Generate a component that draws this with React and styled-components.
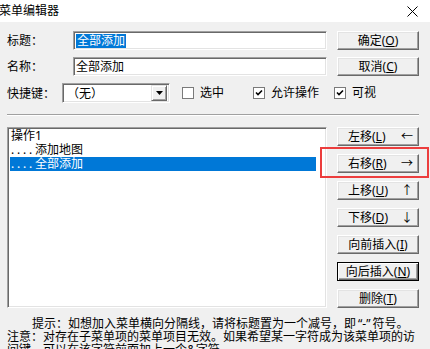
import React from "react";
import styled, { createGlobalStyle } from "styled-components";

const GlobalStyle = createGlobalStyle`
  html, body {
    margin: 0;
    padding: 0;
    background: #f0f0f0;
  }
  body {
    font-family: "Noto Sans", "Noto Sans CJK SC", sans-serif;
    font-size: 12px;
    color: #000;
  }
`;

const Window = styled.div`
  width: 430px;
  height: 349px;
  overflow: hidden;
  background: #f0f0f0;
  display: flex;
  flex-direction: column;
`;

const TitleBar = styled.div`
  height: 22px;
  flex: none;
  background: #fff;
  display: flex;
  align-items: center;
  justify-content: space-between;
  padding-right: 12px;
`;

const Title = styled.span`
  font-size: 12px;
  line-height: 22px;
  margin-left: -1px;
`;

const Body = styled.div`
  padding: 9px 11px 0 7px;
  display: flex;
  flex-direction: column;
`;

const FieldGrid = styled.div`
  display: grid;
  grid-template-columns: 56px 254px 82px;
  grid-auto-rows: 19px;
  column-gap: 10px;
  row-gap: 7px;
  align-items: center;
`;

const Label = styled.span`
  line-height: 19px;
  white-space: nowrap;
`;

const Sunken = styled.div`
  box-sizing: border-box;
  background: #fff;
  border-top: 1px solid #a0a0a0;
  border-left: 1px solid #a0a0a0;
  border-right: 1px solid #fff;
  border-bottom: 1px solid #fff;
  box-shadow: inset 1px 1px #696969, inset -1px -1px #e3e3e3;
`;

const TextBox = styled(Sunken)`
  height: 19px;
  padding: 0 2px;
  display: flex;
  align-items: center;
  line-height: 14px;
`;

const Selected = styled.span`
  background: #0078d7;
  color: #fff;
  padding: 0 1px;
`;

const Btn = styled.button`
  box-sizing: border-box;
  height: 19px;
  width: 82px;
  padding: ${(p) => (p.$split ? "0 5px 0 10px" : "0")};
  margin: 0;
  font: inherit;
  line-height: 14px;
  color: #000;
  background: #f0f0f0;
  display: flex;
  align-items: center;
  justify-content: ${(p) => (p.$split ? "space-between" : "center")};
  border: 1px solid transparent;
  border-top-color: ${(p) => (p.$primary ? "#000" : "#fff")};
  border-left-color: ${(p) => (p.$primary ? "#000" : "#fff")};
  border-right-color: ${(p) => (p.$primary ? "#000" : "#696969")};
  border-bottom-color: ${(p) => (p.$primary ? "#000" : "#696969")};
  box-shadow: ${(p) =>
    p.$primary
      ? "inset 1px 1px #fff, inset -1px -1px #696969, inset -2px -2px #a0a0a0"
      : "inset -1px -1px #a0a0a0, inset 1px 1px #e3e3e3"};
`;

const Mn = styled.u`
  text-underline-offset: 1px;
`;

const OptionRow = styled.div`
  display: flex;
  align-items: center;
  height: 20px;
  margin-top: 7px;
`;

const ShortLabel = styled(Label)`
  width: 55px;
`;

const Combo = styled(Sunken)`
  width: 108px;
  height: 20px;
  display: flex;
  align-items: center;
  justify-content: space-between;
  padding: 2px 2px 2px 4px;
`;

const DropBtn = styled.span`
  box-sizing: border-box;
  width: 16px;
  height: 16px;
  background: #f0f0f0;
  border-top: 1px solid #e3e3e3;
  border-left: 1px solid #e3e3e3;
  border-right: 1px solid #696969;
  border-bottom: 1px solid #696969;
  box-shadow: inset 1px 1px #fff, inset -1px -1px #a0a0a0;
  display: flex;
  align-items: center;
  justify-content: center;
`;

const CheckItem = styled.label`
  display: flex;
  align-items: center;
  gap: 6px;
  margin-left: ${(p) => p.$offset}px;
  line-height: 14px;
`;

const Box = styled.span`
  box-sizing: border-box;
  width: 12px;
  height: 12px;
  background: #fff;
  border: 1px solid #7a7a7a;
  display: flex;
  align-items: center;
  justify-content: center;
`;

const Separator = styled.div`
  margin-top: 11px;
  height: 0;
  border-top: 1px solid #a0a0a0;
  border-bottom: 1px solid #fff;
`;

const Lower = styled.div`
  margin-top: 11px;
  display: grid;
  grid-template-columns: 320px 82px;
  column-gap: 10px;
  height: 181px;
`;

const ListBox = styled(Sunken)`
  padding: 1px 2px;
  display: flex;
  flex-direction: column;
  overflow: hidden;
`;

const Item = styled.div`
  height: 14px;
  line-height: 14px;
  padding-left: 1px;
  margin-right: 8px;
  white-space: pre;
  overflow: hidden;
  background: ${(p) => (p.$active ? "#0078d7" : "transparent")};
  color: ${(p) => (p.$active ? "#fff" : "#000")};
`;

const Dots = styled.span`
  letter-spacing: 2.8px;
`;

const ButtonCol = styled.div`
  display: flex;
  flex-direction: column;
  justify-content: space-between;
`;

const Spot = styled.div`
  position: relative;
`;

const Ring = styled.div`
  position: absolute;
  top: -7px;
  left: -17px;
  right: -10px;
  bottom: -5px;
  border: 2px solid #ec3d3d;
  pointer-events: none;
`;

const Notes = styled.div`
  margin-top: 9px;
  line-height: 13px;
`;

const Note = styled.p`
  margin: 0;
  text-indent: ${(p) => p.$indent || 0}px;
  white-space: ${(p) => (p.$single ? "nowrap" : "normal")};
`;

const Quote = styled.span`
  padding: 0 2px;
`;

const CheckMark = () => (
  <svg width="8" height="8" viewBox="0 0 8 8">
    <path d="M1 3.5 L3 5.5 L7 1.5" fill="none" stroke="#000" strokeWidth="1.6" />
  </svg>
);

const Check = ({ checked, children, offset }) => (
  <CheckItem $offset={offset}>
    <Box>{checked && <CheckMark />}</Box>
    <span>{children}</span>
  </CheckItem>
);

const App = () => {
  return (
    <Window>
      <GlobalStyle />
      <TitleBar>
        <Title>菜单编辑器</Title>
        <svg width="11" height="11" viewBox="0 0 11 11">
          <path d="M0.5 0.5 L10.5 10.5 M10.5 0.5 L0.5 10.5" stroke="#000" strokeWidth="1" />
        </svg>
      </TitleBar>
      <Body>
        <FieldGrid>
          <Label>标题：</Label>
          <TextBox>
            <Selected>全部添加</Selected>
          </TextBox>
          <Btn>
            确定(<Mn>O</Mn>)
          </Btn>
          <Label>名称：</Label>
          <TextBox>全部添加</TextBox>
          <Btn>
            取消(<Mn>C</Mn>)
          </Btn>
        </FieldGrid>
        <OptionRow>
          <ShortLabel>快捷键：</ShortLabel>
          <Combo>
            <span>（无）</span>
            <DropBtn>
              <svg width="7" height="4" viewBox="0 0 7 4">
                <path d="M0 0 H7 L3.5 4 Z" fill="#000" />
              </svg>
            </DropBtn>
          </Combo>
          <Check offset={12}>选中</Check>
          <Check offset={29} checked>
            允许操作
          </Check>
          <Check offset={15} checked>
            可视
          </Check>
        </OptionRow>
        <Separator />
        <Lower>
          <ListBox>
            <Item>操作1</Item>
            <Item>
              <Dots>....</Dots>添加地图
            </Item>
            <Item $active>
              <Dots>....</Dots>全部添加
            </Item>
          </ListBox>
          <ButtonCol>
            <Btn $split>
              <span>
                左移(<Mn>L</Mn>)
              </span>
              <span>←</span>
            </Btn>
            <Spot>
              <Btn $split>
                <span>
                  右移(<Mn>R</Mn>)
                </span>
                <span>→</span>
              </Btn>
              <Ring />
            </Spot>
            <Btn $split>
              <span>
                上移(<Mn>U</Mn>)
              </span>
              <span>↑</span>
            </Btn>
            <Btn $split>
              <span>
                下移(<Mn>D</Mn>)
              </span>
              <span>↓</span>
            </Btn>
            <Btn>
              向前插入(<Mn>I</Mn>)
            </Btn>
            <Btn $primary>
              向后插入(<Mn>N</Mn>)
            </Btn>
            <Btn>
              删除(<Mn>T</Mn>)
            </Btn>
          </ButtonCol>
        </Lower>
        <Notes>
          <Note $indent={25} $single>
            提示：如想加入菜单横向分隔线，请将标题置为一个减号，即<Quote>“-”</Quote>符号。
          </Note>
          <Note>注意：对存在子菜单项的菜单项目无效。如果希望某一字符成为该菜单项的访问键，可以在该字符前面加上一个&amp;字符。</Note>
        </Notes>
      </Body>
    </Window>
  );
};

export default App;
